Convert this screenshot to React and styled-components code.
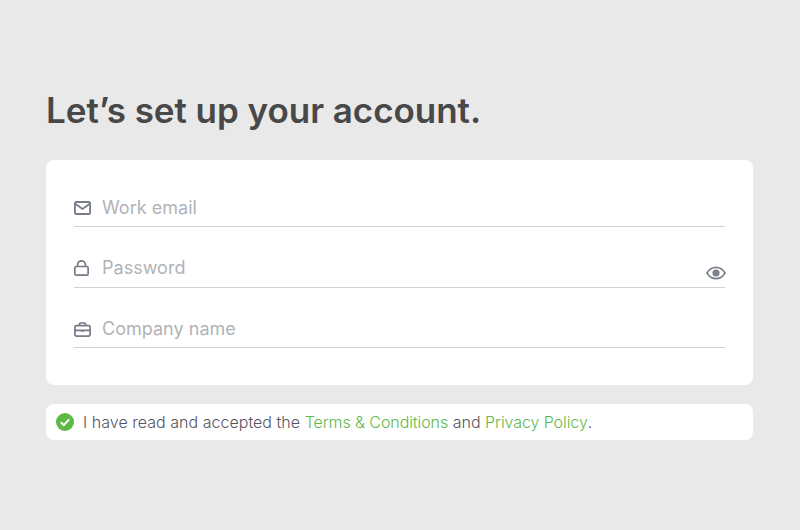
import React from "react";
import styled, { createGlobalStyle } from "styled-components";

const Global = createGlobalStyle`
  html, body { margin: 0; padding: 0; background: #e9e9e9; }
  body { font-family: Inter, "Liberation Sans", sans-serif; }
`;

const Page = styled.main`
  width: 800px;
  height: 530px;
  box-sizing: border-box;
  padding: 89px 47px 0 46px;
  background: #e9e9e9;
  overflow: hidden;
`;

const Title = styled.h1`
  margin: 0 0 28px;
  height: 43px;
  font-size: 35px;
  line-height: 43px;
  font-weight: 600;
  letter-spacing: -0.04px;
  color: #484848;
`;

const Card = styled.section`
  height: 225px;
  box-sizing: border-box;
  padding: 27px 28px 0 28px;
  background: #fff;
  border-radius: 8px;
`;

const Field = styled.div`
  display: flex;
  align-items: flex-start;
  height: ${(p) => p.$h}px;
  box-sizing: border-box;
  padding-top: ${(p) => p.$pt}px;
  border-bottom: 1px solid #d2d2d2;
  margin-bottom: ${(p) => p.$mb || 0}px;
`;

const IconSlot = styled.span`
  width: 28px;
  height: 24px;
  flex: none;
  display: flex;
  align-items: center;
  color: #757a86;
`;

const Placeholder = styled.span`
  flex: 1;
  font-size: 18px;
  line-height: 24px;
  letter-spacing: 0.02px;
  color: #b0b3b8;
`;

const Eye = styled.span`
  display: flex;
  align-self: flex-end;
  margin: 0 -1px 7px 0;
  color: #7b808b;
`;

const Consent = styled.div`
  display: flex;
  align-items: center;
  gap: 9px;
  height: 36px;
  margin-top: 19px;
  padding-left: 10px;
  background: #fff;
  border-radius: 8px;
  font-size: 16px;
  font-weight: 300;
  letter-spacing: 0.03px;
  color: #55555f;
`;

const Link = styled.span`
  letter-spacing: -0.08px;
  color: #5fb94b;
`;

const Mail = () => (
  <svg width="17" height="14" viewBox="0 0 17 14" fill="none" stroke="currentColor" strokeWidth="1.8">
    <rect x="0.900" y="1" width="15.200" height="12" rx="1.600" />
    <path d="M1.200 2.800 8.500 8l7.300-5.200" />
  </svg>
);
const Lock = () => (
  <svg width="15" height="16" viewBox="0 0 15 16" fill="none" stroke="currentColor" strokeWidth="1.700">
    <rect x="0.850" y="6.500" width="13.300" height="8.650" rx="1.500" />
    <path d="M3.600 6.500V4.300a3.900 3.500 0 0 1 7.800 0v2.200" />
  </svg>
);
const Case = () => (
  <svg width="17" height="15" viewBox="0 0 17 15" fill="none" stroke="currentColor" strokeWidth="1.700">
    <rect x="0.900" y="3.700" width="15.200" height="10.400" rx="1.500" />
    <path d="M5.500 3.700V2a1 1 0 0 1 1-1h4a1 1 0 0 1 1 1v1.700M1 8.300h15M7 8.800h3" />
  </svg>
);
const EyeIcon = () => (
  <svg width="20" height="14" viewBox="0 0 20 14">
    <path d="M1 7c2-3.600 5-5.600 9-5.600s7 2 9 5.600c-2 3.600-5 5.600-9 5.600S3 10.600 1 7Z" fill="none" stroke="currentColor" strokeWidth="1.600" />
    <circle cx="10" cy="7" r="3.600" fill="currentColor" />
  </svg>
);
const Check = () => (
  <svg width="18" height="18" viewBox="0 0 18 18">
    <circle cx="9" cy="9" r="9" fill="#5cb946" />
    <path d="M4.800 9.300 7.800 12l5.400-5.600" fill="none" stroke="#fff" strokeWidth="2" />
  </svg>
);

export default function App() {
  return (
    <Page>
      <Global />
      <Title>Let’s set up your account.</Title>
      <Card>
        <Field $h={40} $pt={9} $mb={20}>
          <IconSlot><Mail /></IconSlot>
          <Placeholder>Work email</Placeholder>
        </Field>
        <Field $h={41} $pt={9} $mb={19}>
          <IconSlot><Lock /></IconSlot>
          <Placeholder>Password</Placeholder>
          <Eye><EyeIcon /></Eye>
        </Field>
        <Field $h={41} $pt={10}>
          <IconSlot><Case /></IconSlot>
          <Placeholder>Company name</Placeholder>
        </Field>
      </Card>
      <Consent>
        <Check />
        <span>
          I have read and accepted the <Link>Terms &amp; Conditions</Link> and <Link>Privacy Policy</Link>.
        </span>
      </Consent>
    </Page>
  );
}
